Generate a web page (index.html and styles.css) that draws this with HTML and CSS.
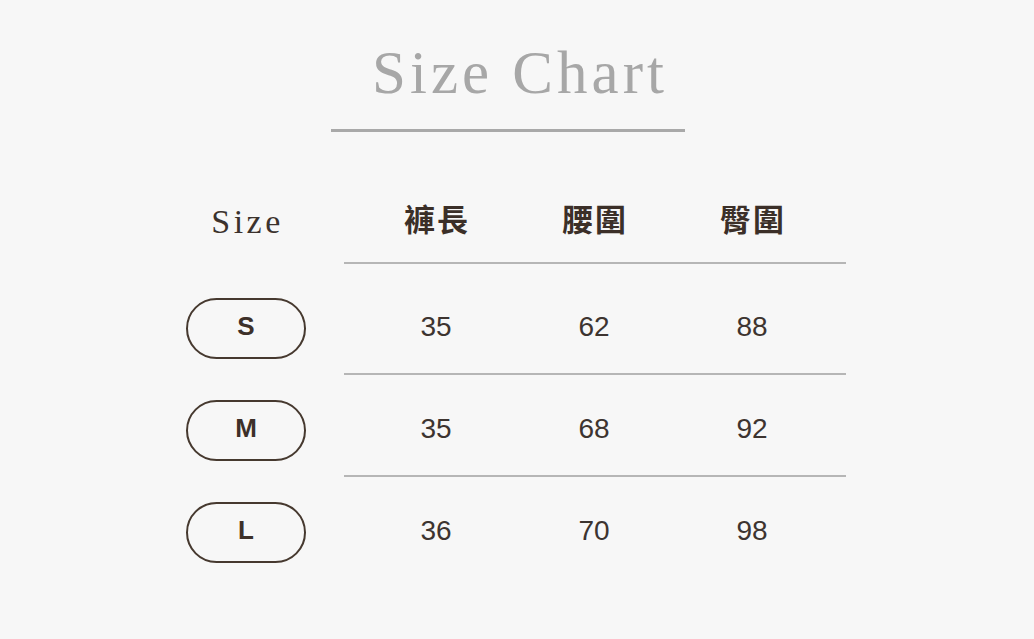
FILE: index.html
```html
<!DOCTYPE html>
<html lang="zh-Hant">
<head>
<meta charset="utf-8">
<title>Size Chart</title>
<link rel="stylesheet" href="styles.css">
</head>
<body>
<main class="page">
  <header class="title-wrap">
    <h1 class="title">Size Chart</h1>
  </header>
  <section class="chart">
    <div class="row row--head">
      <div class="label"><span class="label-text">Size</span></div>
      <div class="cells">
        <div class="cell cell--head">褲長</div>
        <div class="cell cell--head">腰圍</div>
        <div class="cell cell--head">臀圍</div>
      </div>
    </div>
    <div class="row">
      <div class="label"><span class="pill">S</span></div>
      <div class="cells">
        <div class="cell">35</div>
        <div class="cell">62</div>
        <div class="cell">88</div>
      </div>
    </div>
    <div class="row">
      <div class="label"><span class="pill">M</span></div>
      <div class="cells">
        <div class="cell">35</div>
        <div class="cell">68</div>
        <div class="cell">92</div>
      </div>
    </div>
    <div class="row row--last">
      <div class="label"><span class="pill">L</span></div>
      <div class="cells">
        <div class="cell">36</div>
        <div class="cell">70</div>
        <div class="cell">98</div>
      </div>
    </div>
  </section>
</main>
</body>
</html>
```
FILE: styles.css
```css
html, body {
  margin: 0;
  padding: 0;
  background: #f7f7f7;
}

body {
  width: 1034px;
  height: 639px;
  overflow: hidden;
  font-family: "Liberation Sans", Arial, sans-serif;
  color: #3b302a;
}

.page {
  display: flex;
  flex-direction: column;
  padding-top: 42px;
}

.title-wrap {
  box-sizing: border-box;
  width: 354px;
  margin-left: 331px;
  padding: 0 0 26px 24px;
  border-bottom: 3px solid #a9a9a9;
  text-align: center;
}

.title {
  margin: 0;
  font-family: "Liberation Serif", "Times New Roman", serif;
  font-weight: normal;
  font-size: 61px;
  line-height: 61px;
  letter-spacing: 4px;
  color: #a7a7a7;
}

.chart {
  display: flex;
  flex-direction: column;
  margin-left: 186px;
  margin-top: 71px;
  width: 660px;
}

.row {
  display: flex;
  align-items: center;
  padding: 25px 0 16px;
  background: linear-gradient(#b6b6b6, #b6b6b6) no-repeat right bottom / 502px 2px;
}

.row--head {
  align-items: flex-start;
  padding: 0 0 26px;
  margin-bottom: 9px;
}

.row--last {
  background: none;
}

.label {
  width: 120px;
  margin-right: 38px;
  display: flex;
  justify-content: center;
  flex-shrink: 0;
}

.label-text {
  font-family: "Liberation Serif", "Times New Roman", serif;
  font-size: 34px;
  line-height: 33px;
  letter-spacing: 3.5px;
  padding-left: 3px;
  color: #3b322d;
  margin-top: 2px;
}

.pill {
  box-sizing: border-box;
  width: 121px;
  height: 61px;
  border: 2px solid #46392f;
  border-radius: 31px;
  display: flex;
  align-items: center;
  justify-content: center;
  padding-bottom: 5px;
  font-family: "Liberation Sans", Arial, sans-serif;
  font-weight: bold;
  font-size: 26px;
  color: #3d3029;
}

.cells {
  display: grid;
  grid-template-columns: repeat(3, 158px);
  padding-left: 13px;
  width: 502px;
  box-sizing: border-box;
}

.cell {
  text-align: center;
  font-size: 28px;
  line-height: 32px;
  color: #3d3430;
  padding-bottom: 3px;
}

.cell--head {
  font-family: "Noto Sans CJK TC", "Noto Sans CJK SC", sans-serif;
  font-weight: bold;
  font-size: 31px;
  line-height: 30px;
  letter-spacing: 2px;
  padding: 0 0 0 2px;
  color: #3b2f28;
}
```
